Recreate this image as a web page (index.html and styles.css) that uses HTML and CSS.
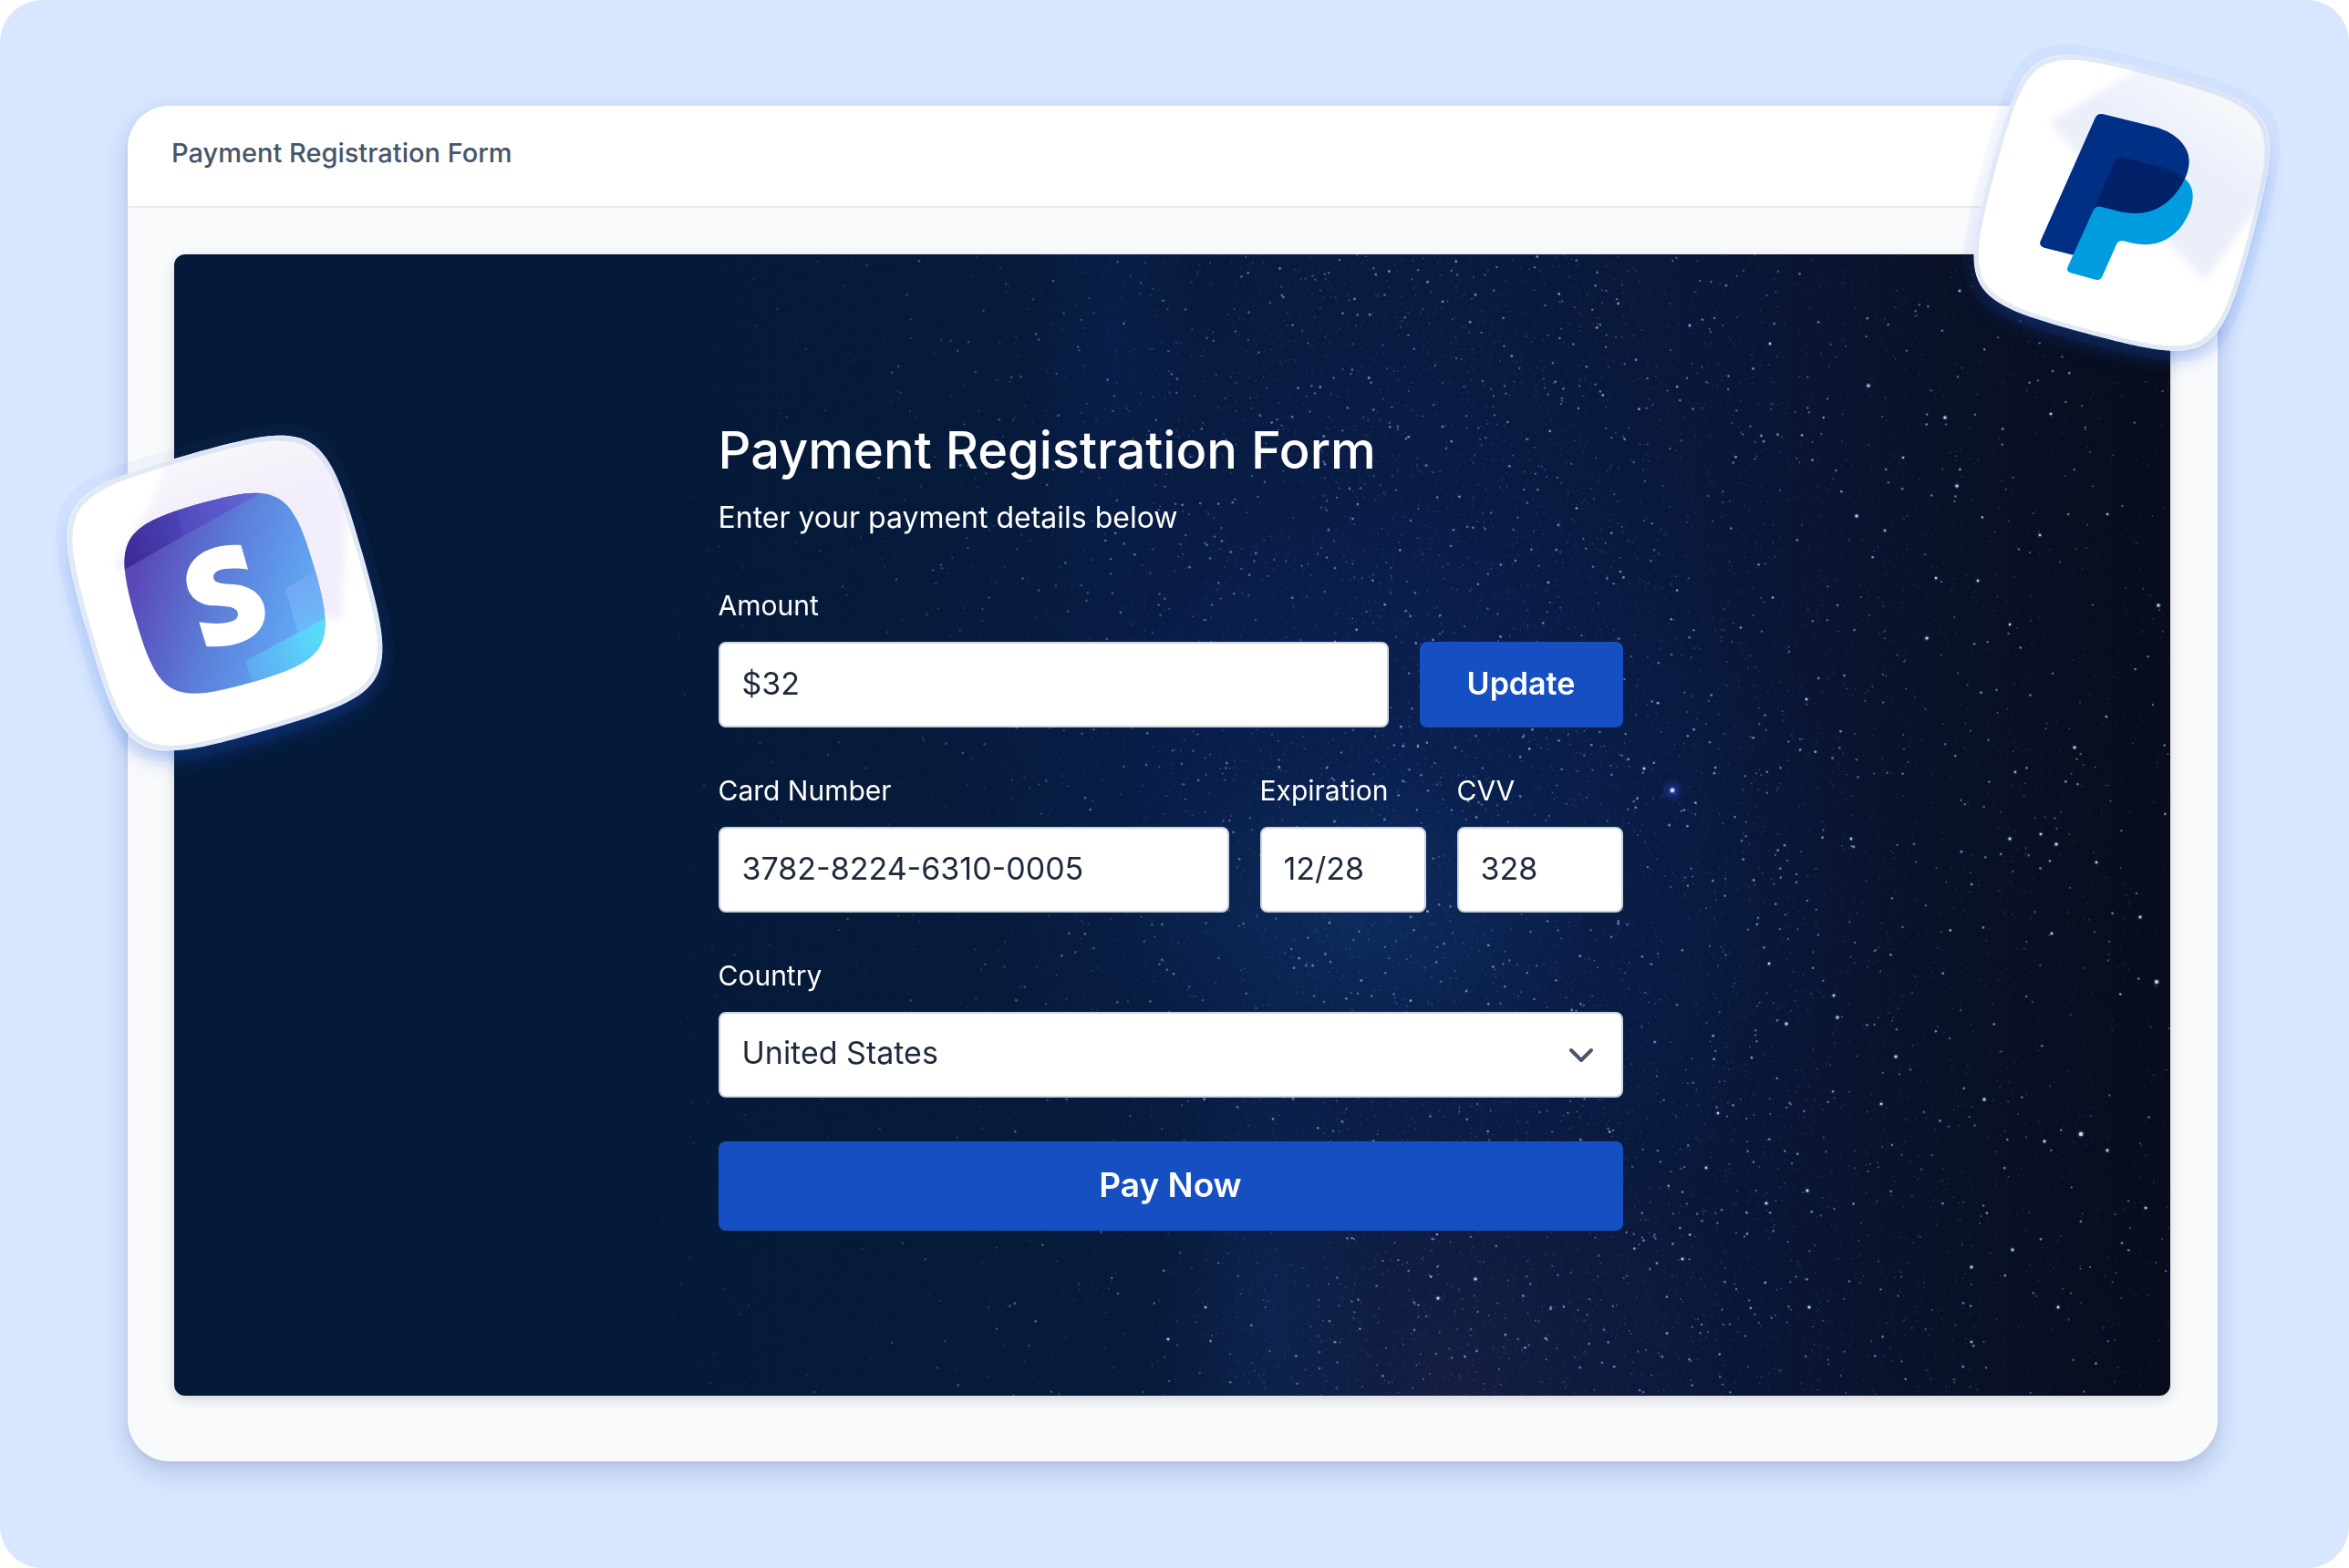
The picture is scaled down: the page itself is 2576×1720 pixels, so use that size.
FILE: index.html
```html
<!DOCTYPE html>
<html lang="en">
<head>
<meta charset="utf-8">
<meta name="viewport" content="width=device-width, initial-scale=1">
<title>Payment Registration Form</title>
<link rel="stylesheet" href="styles.css">
</head>
<body>
<div class="stage">
  <main class="window">
    <header class="window-header">
      <h1 class="window-title">Payment Registration Form</h1>
    </header>
    <section class="panel">
      <canvas class="sky" aria-hidden="true"></canvas>
      <form class="form">
        <h2 class="form-title">Payment Registration Form</h2>
        <p class="form-subtitle">Enter your payment details below</p>
        <div class="row">
          <div class="field field-amount">
            <label for="amount">Amount</label>
            <input class="control" id="amount" type="text" value="$32">
          </div>
          <button class="button button-update" type="button">Update</button>
        </div>
        <div class="row">
          <div class="field field-card">
            <label for="card">Card Number</label>
            <input class="control" id="card" type="text" value="3782-8224-6310-0005">
          </div>
          <div class="field field-short">
            <label for="expiration">Expiration</label>
            <input class="control" id="expiration" type="text" value="12/28">
          </div>
          <div class="field field-short">
            <label for="cvv">CVV</label>
            <input class="control" id="cvv" type="text" value="328">
          </div>
        </div>
        <div class="row">
          <div class="field field-card">
            <label for="country">Country</label>
            <div class="select-wrap">
              <select class="control" id="country"><option selected>United States</option><option>Canada</option></select>
              <svg class="chevron" viewBox="0 0 28 18" aria-hidden="true"><path d="M3 3l11 11L25 3"/></svg>
            </div>
          </div>
        </div>
        <button class="button button-pay" type="submit">Pay Now</button>
      </form>
    </section>
  </main>

  <svg class="tile tile-stripe" viewBox="0 0 1200 1200" role="img" aria-label="Stripe">
    <defs>
      <path id="squircle" d="M0-471C445-471 471-445 471 0S445 471 0 471-471 445-471 0-445-471 0-471Z"/>
      <filter id="soft" x="-20%" y="-20%" width="140%" height="140%"><feGaussianBlur stdDeviation="12"/></filter>
      <filter id="glow" x="-30%" y="-30%" width="160%" height="160%"><feGaussianBlur stdDeviation="44"/></filter>
      <clipPath id="stripe-card"><use href="#squircle" transform="translate(590 602) rotate(-16)"/></clipPath>
      <clipPath id="stripe-icon"><path transform="translate(590 602) rotate(-16)" d="M0-306C268-306 306-268 306 0S268 306 0 306-306 268-306 0-268-306 0-306Z"/></clipPath>
      <linearGradient id="s-sheen" gradientUnits="userSpaceOnUse" x1="520" y1="90" x2="600" y2="340"><stop offset="0" stop-color="#f9f8fc"/><stop offset="1" stop-color="#f2eefb"/></linearGradient>
      <linearGradient id="s-body" gradientUnits="userSpaceOnUse" x1="290" y1="560" x2="860" y2="720"><stop offset="0" stop-color="#5a48b8"/><stop offset=".5" stop-color="#5c80da"/><stop offset="1" stop-color="#62abf6"/></linearGradient>
      <linearGradient id="s-dark" gradientUnits="userSpaceOnUse" x1="260" y1="480" x2="450" y2="390"><stop offset="0" stop-color="#3c2b97"/><stop offset="1" stop-color="#4a42b4"/></linearGradient>
      <linearGradient id="s-mid" gradientUnits="userSpaceOnUse" x1="440" y1="370" x2="700" y2="280"><stop offset="0" stop-color="#504abb"/><stop offset="1" stop-color="#6567d8"/></linearGradient>
      <linearGradient id="s-cyan" gradientUnits="userSpaceOnUse" x1="660" y1="850" x2="900" y2="760"><stop offset="0" stop-color="#60a8f1"/><stop offset="1" stop-color="#59dafb"/></linearGradient>
      <linearGradient id="s-light" gradientUnits="userSpaceOnUse" x1="820" y1="580" x2="880" y2="700"><stop offset="0" stop-color="#72a8f5"/><stop offset="1" stop-color="#6bb9f8"/></linearGradient>
    </defs>
    <use class="tile-glow" href="#squircle" filter="url(#glow)" transform="translate(592 654) rotate(-16) scale(.94)"/>
    <use class="tile-halo" href="#squircle" transform="translate(590 602) rotate(-16) scale(1.07)"/>
    <use class="tile-card" href="#squircle" transform="translate(590 602) rotate(-16)"/>
    <g clip-path="url(#stripe-card)"><path d="M405 150L345 310 225 520 975 690 990 330 880 40Z" fill="url(#s-sheen)" filter="url(#soft)"/></g>
    <use class="tile-rim" href="#squircle" transform="translate(590 602) rotate(-16) scale(.983)"/>
    <g clip-path="url(#stripe-icon)">
      <path d="M200 200H1000V1000H200Z" fill="url(#s-body)"/>
      <path d="M240 536L453 414 432 335 400 200H200Z" fill="url(#s-dark)"/>
      <path d="M432 335L454 414 730 260 600 200H400Z" fill="url(#s-mid)"/>
      <path d="M788 586L960 492V660L830 731Z" fill="url(#s-light)"/>
      <path d="M658 826L960 661V960H700Z" fill="url(#s-cyan)"/>
    </g>
    <path fill="#fff" d="M643 444L666 524C600 516 551 522 552 550C554 570 580 571 620 573C680 578 723 614 722 670C720 738 648 786 529 777L505 697C572 707 633 702 633 672C632 644 592 645 545 643C492 637 462 602 463 552C468 480 545 436 643 444Z"/>
  </svg>

  <svg class="tile tile-paypal" viewBox="0 0 1200 1200" role="img" aria-label="PayPal">
    <defs>
      <clipPath id="paypal-card"><use href="#squircle" transform="translate(590 608) rotate(15) scale(.944)"/></clipPath>
      <linearGradient id="p-sheen" gradientUnits="userSpaceOnUse" x1="960" y1="230" x2="800" y2="470"><stop offset="0" stop-color="#f7f9fc"/><stop offset="1" stop-color="#ebeffa"/></linearGradient>
    </defs>
    <use class="tile-glow" href="#squircle" filter="url(#glow)" transform="translate(592 660) rotate(15) scale(.88)"/>
    <use class="tile-halo" href="#squircle" transform="translate(590 608) rotate(15) scale(1.012)"/>
    <use class="tile-card" href="#squircle" transform="translate(590 608) rotate(15) scale(.944)"/>
    <g clip-path="url(#paypal-card)"><path d="M355 340L640 170 760 60 1200 300 1060 590 865 862 430 430Z" fill="url(#p-sheen)" filter="url(#soft)"/></g>
    <use class="tile-rim" href="#squircle" transform="translate(590 608) rotate(15) scale(.928)"/>
    <path fill="#002f86" d="M503 328Q511 311 530 316L700 358C772 378 813 424 812 472C811 495 806 512 798 528L520 640 430 779 335 755Q318 749 322 736Z"/>
    <path fill="#019ce0" d="M798 528C817 545 825 565 824 592C822 622 810 650 790 680C757 724 715 745 665 745C635 744 615 738 597 733Q581 730 574 742L527 848Q520 864 504 860L422 838Q407 833 412 820L496 634Q504 616 522 620Z"/>
    <path fill="#012169" d="M568 470Q576 453 594 457L720 490C758 501 782 514 798 528C768 592 712 643 635 642C590 641 560 629 522 620Q510 616 500 625Z"/>
  </svg>
</div>
<script src="sky.js"></script>
</body>
</html>
```
FILE: styles.css
```css
* { box-sizing: border-box; }

body {
  margin: 0;
  background: #fff;
  font-family: Inter, "Liberation Sans", sans-serif;
}

.stage {
  position: relative;
  display: flex;
  min-height: 100vh;
  padding: 116px 144px 117px 140px;
  border-radius: 46px;
  background: #d8e7ff;
}

.window {
  flex: 1;
  display: flex;
  flex-direction: column;
  border-radius: 46px;
  background: #f9fafc;
  box-shadow: 0 12px 28px rgba(15, 35, 95, .18), 0 2px 10px rgba(15, 35, 95, .06);
}

.window-header {
  padding: 35px 48px 41px;
  border-bottom: 2px solid #e9ebef;
  border-radius: 46px 46px 0 0;
  background: #fff;
}

.window-title {
  margin: 0;
  color: #475569;
  font-size: 29px;
  font-weight: 500;
  line-height: 34px;
}

.panel {
  position: relative;
  flex: 1;
  display: flex;
  align-items: center;
  justify-content: center;
  margin: 51px 52px 72px 51px;
  overflow: hidden;
  border-radius: 12px;
  background:
    radial-gradient(260px 180px at 59% 58%, rgba(18, 58, 112, .4), transparent),
    radial-gradient(520px 420px at 62% 56%, rgba(10, 40, 98, .45), transparent),
    radial-gradient(130px 380px at 55% 92%, rgba(14, 50, 104, .35), transparent),
    radial-gradient(320px 320px at 64% 98%, rgba(32, 34, 70, .4), transparent),
    radial-gradient(100px 340px at 47% 6%, rgba(10, 40, 100, .3), transparent),
    radial-gradient(520px 420px at 57% 34%, rgba(10, 34, 96, .35), transparent),
    linear-gradient(90deg, #051a38 0 24%, #061a3a 44%, #0a1b40 62%, #09183a 76%, #091127 90%, #080d1c 100%);
  box-shadow: 0 4px 14px rgba(15, 23, 42, .16);
}

.sky {
  position: absolute;
  inset: 0;
  width: 100%;
  height: 100%;
}

.form {
  position: relative;
  flex: 0 1 992px;
  display: flex;
  flex-direction: column;
  margin-right: 4px;
  color: #fff;
}

.form-title {
  margin: 0 0 20px;
  font-size: 56px;
  font-weight: 500;
  line-height: 68px;
}

.form-subtitle {
  margin: 0 0 58px;
  font-size: 32px;
  line-height: 40px;
}

.row {
  display: flex;
  align-items: flex-end;
  gap: 34px;
  margin-bottom: 51px;
}

.row:last-of-type { margin-bottom: 48px; }

.field {
  display: flex;
  flex-direction: column;
  gap: 22px;
  min-width: 0;
}

.field-amount, .field-card { flex: 1; }
.field-short { flex: 0 0 182px; }

.field label {
  font-size: 30px;
  line-height: 36px;
}

.control {
  display: block;
  width: 100%;
  height: 94px;
  padding: 0 24px 4px;
  border: 2px solid #cbd5e1;
  border-radius: 8px;
  background: #fff;
  color: #1e293b;
  font: 400 34px/40px Inter, "Liberation Sans", sans-serif;
  appearance: none;
}

.select-wrap { position: relative; }

.chevron {
  position: absolute;
  top: 50%;
  right: 32px;
  width: 28px;
  margin-top: -8px;
  fill: none;
  stroke: #475569;
  stroke-width: 4;
  stroke-linecap: round;
  stroke-linejoin: round;
  pointer-events: none;
}

.button {
  padding: 0 0 4px;
  border: 0;
  border-radius: 8px;
  background: #154fc2;
  color: #fff;
  font-family: inherit;
  font-weight: 600;
}

.button-update {
  flex: 0 0 223px;
  height: 94px;
  font-size: 34px;
}

.button-pay {
  height: 98px;
  font-size: 37px;
}

.tile {
  position: absolute;
  width: 400px;
  height: 400px;
  overflow: visible;
  pointer-events: none;
}

.tile-stripe { top: 450px; left: 50px; }
.tile-paypal { top: 20px; right: 46px; }

.tile-glow { fill: #1450d2; opacity: .4; }
.tile-halo { fill: #3c78f0; opacity: .05; }
.tile-card { fill: #fff; }
.tile-rim { fill: none; stroke: #c3d2ee; stroke-opacity: .5; stroke-width: 16; }
```
FILE: sky.js
```js
const canvas = document.querySelector('.sky');

// Bright stars: x, y, radius, as laid out on a 2189 x 1252 sky.
const bright = [
  [1845,287,2],[1955,254,2],[1942,179,2],[1858,144,2],[2058,175,1.6],[1958,40,1.4],[2176,385,2],
  [1922,421,2],[2013,406,1.5],[2084,541,1.8],[2019,568,1.4],[2013,641,1.9],[2047,636,1.7],
  [2064,647,2],[2108,667,1.6],[1839,641,1.6],[1643,588,3],[1612,564,1.7],[1750,98,1.5],
  [1662,78,1.4],[2046,308,1.6],[1790,488,1.5],[1932,355,1.5],[1978,358,1.6],[1876,303,1.4],
  [2120,285,1.3],[1896,223,1.4],[2091,965,2.8],[2174,798,2.6],[1768,844,2],[1824,837,1.9],
  [1888,880,2],[1985,927,2],[2066,1155,1.8],[1971,1111,1.8],[2016,1092,1.8],[2156,727,1.8],
  [2059,745,1.6],[2051,973,1.8],[1872,932,1.7],[1793,1155,1.8],[1791,1027,1.9],[1746,1041,1.8],
  [1386,1145,2],[1427,1124,1.9],[1654,1102,1.7],[1820,813,1.7],[1680,1002,1.7],[2162,1046,1.6],
  [2120,983,1.8],[1749,778,1.6],[1693,942,1.6],[1971,1193,1.4],[1090,1190,1.6],[1131,1155,1.4]
];

function paint() {
  const w = canvas.width = canvas.clientWidth;
  const h = canvas.height = canvas.clientHeight;
  const c = canvas.getContext('2d');
  let seed = 20417;
  const rnd = () => (seed = (seed * 16807) % 2147483647) / 2147483647;
  const dot = (x, y, r, color) => {
    c.fillStyle = color;
    c.beginPath();
    c.arc(x, y, r, 0, 7);
    c.fill();
  };

  for (let i = 0; i < 24000; i++) {
    const u = .23 + rnd() * .77;
    const v = rnd();
    // The band of stars leans to the right on its way down.
    const d = (u - (.6 + v * .08)) / .22;
    const keep = .2 + .8 * Math.exp(-d * d);
    if (rnd() > keep) continue;
    const fade = Math.min(1, Math.max(0, (u - .2) / .4));
    const m = Math.pow(rnd(), 7);
    const tint = rnd() < .75 ? '140,170,235' : '195,200,230';
    dot(u * w, v * h, .8 + m * .7, `rgba(${tint},${(fade * (.16 + m * .55)).toFixed(3)})`);
  }

  const halo = c.createRadialGradient(.7506 * w, .47 * h, 0, .7506 * w, .47 * h, 14);
  halo.addColorStop(0, 'rgba(60,80,220,.5)');
  halo.addColorStop(1, 'rgba(40,60,200,0)');
  dot(.7506 * w, .47 * h, 14, halo);
  for (const [x, y, r] of bright) {
    dot(x / 2189 * w, y / 1252 * h, r + 1, 'rgba(110,150,230,.25)');
    dot(x / 2189 * w, y / 1252 * h, r * .8, 'rgba(215,230,255,.9)');
  }
}

paint();
addEventListener('resize', paint);
```
